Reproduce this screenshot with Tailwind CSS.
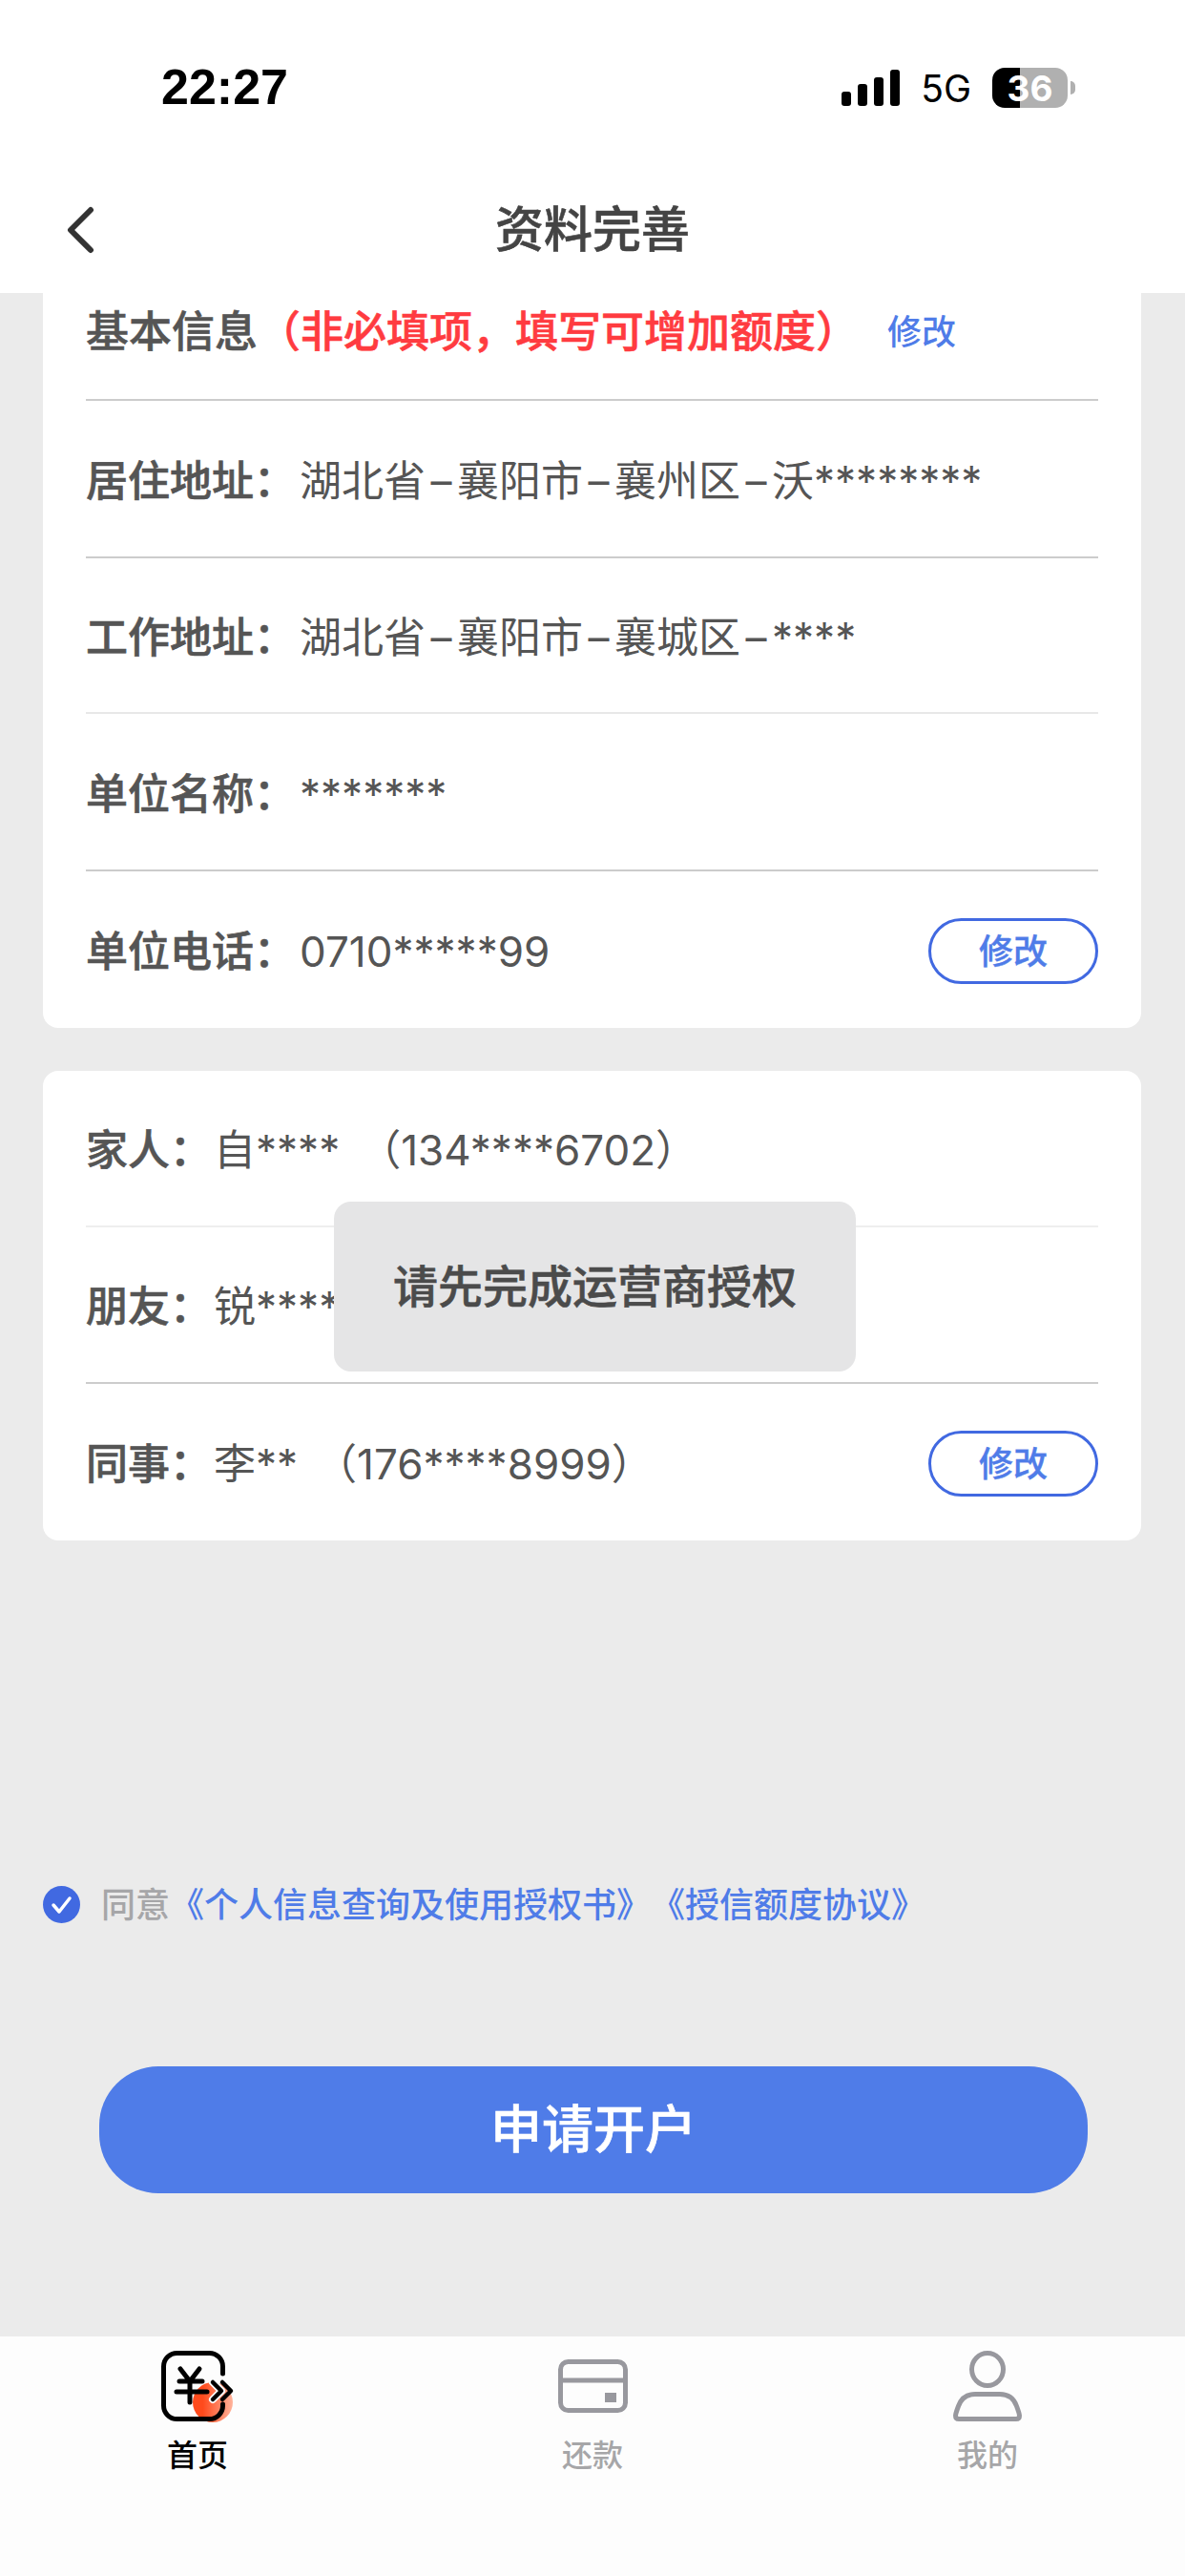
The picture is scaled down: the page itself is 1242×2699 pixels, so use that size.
<!DOCTYPE html>
<html lang="zh-CN">
<head>
<meta charset="utf-8">
<title>资料完善</title>
<script src="https://cdn.jsdelivr.net/npm/@tailwindcss/browser@4"></script>
</head>
<body class="m-0">
<div class="relative w-[1242px] h-[2699px] overflow-hidden flex flex-col bg-[#ebebeb] font-['Inter','Noto_Sans_CJK_SC',sans-serif] text-[#555555]">

  <!-- Status bar + nav -->
  <header class="h-[307px] bg-white shrink-0">
    <div class="h-[184px] pt-[63px] pl-[169px] pr-[115px] flex items-start justify-between text-black">
      <span class="font-['Liberation_Sans',sans-serif] font-bold text-[52px] leading-[57px]">22:27</span>
      <div class="flex items-center h-[58px]">
        <svg width="62" height="40" viewBox="0 0 62 40" fill="#000">
          <rect x="0" y="24" width="10" height="15" rx="3"/>
          <rect x="17" y="16" width="10" height="23" rx="3"/>
          <rect x="34" y="9" width="10" height="30" rx="3"/>
          <rect x="51" y="1" width="10" height="38" rx="3"/>
        </svg>
        <span class="ml-[21px] text-[39px] leading-none font-['Inter',sans-serif]">5G</span>
        <div class="ml-[22px] w-[79px] h-[42px] rounded-[13px] flex items-center justify-center text-white font-bold text-[37px] leading-none bg-[linear-gradient(90deg,#000_37%,#b0b0b0_37%)]">36</div>
        <div class="ml-[3px] w-[5px] h-[14px] rounded-r-full bg-[#b0b0b0]"></div>
      </div>
    </div>
    <div class="relative h-[123px] flex items-center justify-center">
      <svg class="absolute left-[66px] top-[32px]" width="34" height="50" viewBox="0 0 34 50" fill="none" stroke="#333" stroke-width="6" stroke-linecap="round" stroke-linejoin="round">
        <path d="M29 4 L8 25 L29 46"/>
      </svg>
      <h1 class="text-[51px] font-medium [-webkit-text-stroke:0.6px] leading-none text-[#444444] -mt-[11px]">资料完善</h1>
    </div>
  </header>

  <!-- Basic info card -->
  <section class="mx-[45px] w-[1151px] bg-white rounded-b-[16px] px-[45px] shrink-0">
    <div class="h-[113px] pb-[30px] flex items-center border-b-2 border-[#cccccc]">
      <span class="text-[45px] font-medium [-webkit-text-stroke:0.6px]">基本信息</span>
      <span class="text-[45px] font-medium [-webkit-text-stroke:0.6px] text-[#ff3b40]">&#xFF08;非必填项&#xFF0C;填写可增加额度&#xFF09;</span>
      <span class="ml-[30px] text-[36px] font-medium text-[#4f7ce8]">修改</span>
    </div>
    <div class="h-[165px] pt-[4px] flex items-center border-b-2 border-[#cccccc] text-[44px]">
      <span class="font-medium [-webkit-text-stroke:0.6px]">居住地址&#xFF1A;</span><span class="ml-[4px]">湖北省<span class="mx-[5.5px]">–</span>襄阳市<span class="mx-[5.5px]">–</span>襄州区<span class="mx-[5.5px]">–</span>沃********</span>
    </div>
    <div class="h-[163px] pt-[4px] flex items-center border-b-2 border-[#e8e8e8] text-[44px]">
      <span class="font-medium [-webkit-text-stroke:0.6px]">工作地址&#xFF1A;</span><span class="ml-[4px]">湖北省<span class="mx-[5.5px]">–</span>襄阳市<span class="mx-[5.5px]">–</span>襄城区<span class="mx-[5.5px]">–</span>****</span>
    </div>
    <div class="h-[165px] pt-[4px] flex items-center border-b-2 border-[#cccccc] text-[44px]">
      <span class="font-medium [-webkit-text-stroke:0.6px]">单位名称&#xFF1A;</span><span class="ml-[4px]">*******</span>
    </div>
    <div class="h-[164px] pt-[3px] flex items-center text-[44px]">
      <span class="font-medium [-webkit-text-stroke:0.6px]">单位电话&#xFF1A;</span><span class="ml-[4px]">0710*****99</span>
      <button class="ml-auto w-[178px] h-[69px] rounded-full border-[3px] border-[#4169e1] text-[36px] font-medium [-webkit-text-stroke:0.4px] text-[#4f7ce8] leading-none">修改</button>
    </div>
  </section>

  <!-- Contacts card -->
  <section class="mt-[45px] mx-[45px] w-[1151px] bg-white rounded-[16px] px-[45px] shrink-0">
    <div class="h-[164px] pt-[3px] flex items-center border-b-2 border-[#eeeeee] text-[44px]">
      <span class="font-medium [-webkit-text-stroke:0.6px]">家人&#xFF1A;</span><span class="ml-[2px]">自****</span><span class="ml-[20px]">&#xFF08;134****6702&#xFF09;</span>
    </div>
    <div class="h-[164px] pt-[3px] flex items-center border-b-2 border-[#cccccc] text-[44px]">
      <span class="font-medium [-webkit-text-stroke:0.6px]">朋友&#xFF1A;</span><span class="ml-[2px]">锐****</span>
    </div>
    <div class="h-[164px] pt-[3px] flex items-center text-[44px]">
      <span class="font-medium [-webkit-text-stroke:0.6px]">同事&#xFF1A;</span><span class="ml-[2px]">李**</span><span class="ml-[18px]">&#xFF08;176****8999&#xFF09;</span>
      <button class="ml-auto w-[178px] h-[69px] rounded-full border-[3px] border-[#4169e1] text-[36px] font-medium [-webkit-text-stroke:0.4px] text-[#4f7ce8] leading-none">修改</button>
    </div>
  </section>

  <!-- Agreement -->
  <div class="mt-[362px] ml-[45px] h-[39px] flex items-center text-[36px] font-medium shrink-0">
    <svg width="39" height="39" viewBox="0 0 39 39">
      <circle cx="19.5" cy="19.5" r="19.5" fill="#4169e1"/>
      <path d="M11 20 L17 27 L28 13" fill="none" stroke="#fff" stroke-width="3.5" stroke-linecap="round" stroke-linejoin="round"/>
    </svg>
    <span class="ml-[22px] text-[#a6a6a8]">同意</span>
    <span class="text-[#4f7ce8]">《个人信息查询及使用授权书》</span>
    <span class="text-[#4f7ce8]">《授信额度协议》</span>
  </div>

  <!-- Submit -->
  <button class="mt-[150px] ml-[104px] w-[1036px] h-[133px] rounded-[62px] bg-[#4f7ce8] text-white text-[54px] font-medium [-webkit-text-stroke:0.6px] leading-none shrink-0">申请开户</button>

  <!-- Tab bar -->
  <nav class="mt-auto h-[251px] bg-[#fdfdfd] grid grid-cols-3 pt-[12px] shrink-0">
    <div class="flex flex-col items-center text-black">
      <svg width="90" height="80" viewBox="0 0 90 80" fill="none">
        <defs>
          <linearGradient id="homeDot" x1="0" y1="0" x2="1" y2="0">
            <stop offset="0.25" stop-color="#ff4a1c"/>
            <stop offset="1" stop-color="#ffb39b"/>
          </linearGradient>
        </defs>
        <circle cx="61" cy="57" r="21" fill="url(#homeDot)"/>
        <g stroke="#000" stroke-linecap="round" stroke-linejoin="round">
          <path stroke-width="5" d="M71.5 27 V19.5 a14 14 0 0 0 -14 -14 H23.5 a14 14 0 0 0 -14 14 V60.5 a14 14 0 0 0 14 14 H57.5 a14 14 0 0 0 14 -14 V59"/>
          <path stroke-width="5" d="M27 22 L37 35 L47 22 M26 35 H50 M23 46 H55 M37 35 V57"/>
          <path stroke="#fff" stroke-width="8" d="M61 36 L70 45 L61 54"/>
          <path stroke-width="4.5" d="M61 36 L70 45 L61 54 M71 36 L80 45 L71 54"/>
        </g>
      </svg>
      <span class="mt-[11px] text-[32px] font-medium leading-[44px]">首页</span>
    </div>
    <div class="flex flex-col items-center text-[#a6a6a8]">
      <svg width="90" height="80" viewBox="0 0 90 80" fill="none">
        <rect x="11.5" y="14.5" width="68" height="51" rx="8" stroke="#98989e" stroke-width="5"/>
        <path d="M11 34 H79" stroke="#98989e" stroke-width="5"/>
        <rect x="58" y="47" width="12" height="10" fill="#98989e"/>
      </svg>
      <span class="mt-[11px] text-[32px] font-medium leading-[44px]">还款</span>
    </div>
    <div class="flex flex-col items-center text-[#a6a6a8]">
      <svg width="90" height="80" viewBox="0 0 90 80" fill="none" stroke="#98989e" stroke-width="5">
        <ellipse cx="45" cy="22.5" rx="16.5" ry="17"/>
        <path d="M32 48.5 H58 C68 48.5 73 54 75.5 61 C77 65 78.5 69 78.5 71 Q78.5 74.5 75 74.5 H15 Q11.5 74.5 11.5 71 C11.5 69 13 65 14.5 61 C17 54 22 48.5 32 48.5 Z"/>
      </svg>
      <span class="mt-[11px] text-[32px] font-medium leading-[44px]">我的</span>
    </div>
  </nav>

  <!-- Toast -->
  <div class="absolute left-[350px] top-[1259px] w-[547px] h-[178px] rounded-[18px] bg-[#e5e5e6] flex items-center justify-center text-[47px] font-medium [-webkit-text-stroke:0.6px] text-[#4b4b4b]">请先完成运营商授权</div>
</div>
</body>
</html>
